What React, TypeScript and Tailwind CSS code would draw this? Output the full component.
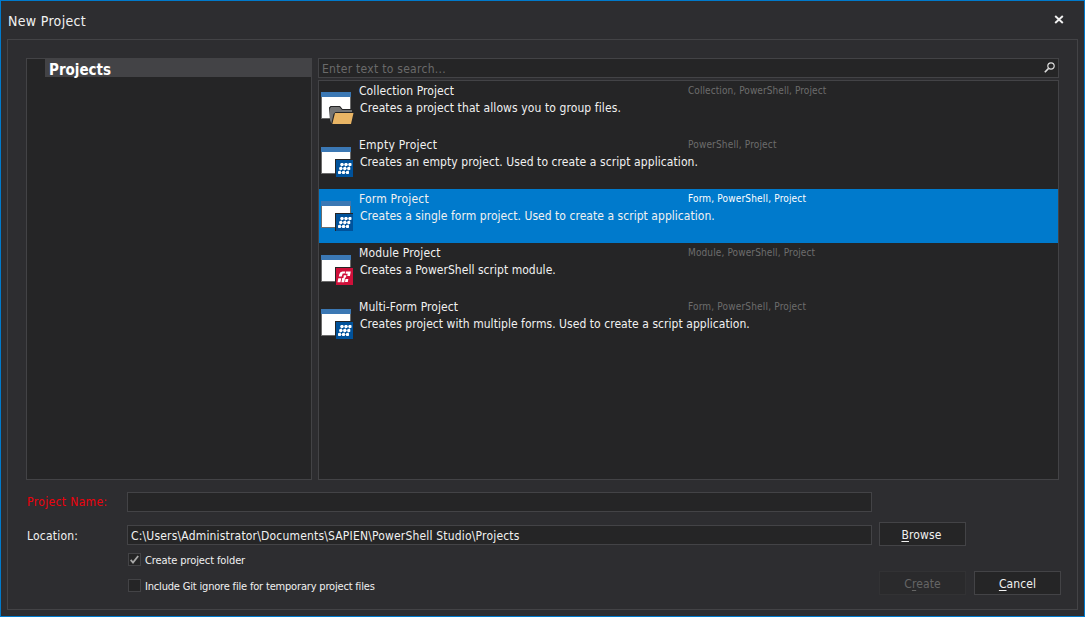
import React from "react";

type Kind = "folder" | "grid" | "module";

interface Template {
  name: string;
  nameClass: string;
  description: string;
  descriptionClass: string;
  tags: string;
  tagsClass: string;
  kind: Kind;
  selected?: boolean;
}

const templates: Template[] = [
  {
    name: "Collection Project",
    nameClass: "tracking-[0.08px]",
    description: "Creates a project that allows you to group files.",
    descriptionClass: "tracking-[0.1px]",
    tags: "Collection, PowerShell, Project",
    tagsClass: "tracking-[0.08px]",
    kind: "folder",
  },
  {
    name: "Empty Project",
    nameClass: "tracking-[0.24px]",
    description: "Creates an empty project. Used to create a script application.",
    descriptionClass: "tracking-[0.08px]",
    tags: "PowerShell, Project",
    tagsClass: "tracking-[0.16px]",
    kind: "grid",
  },
  {
    name: "Form Project",
    nameClass: "tracking-[0.2px]",
    description: "Creates a single form project. Used to create a script application.",
    descriptionClass: "tracking-[0.04px]",
    tags: "Form, PowerShell, Project",
    tagsClass: "tracking-[0.17px]",
    kind: "grid",
    selected: true,
  },
  {
    name: "Module Project",
    nameClass: "tracking-[0.15px]",
    description: "Creates a PowerShell script module.",
    descriptionClass: "tracking-[0.03px]",
    tags: "Module, PowerShell, Project",
    tagsClass: "tracking-[0.12px]",
    kind: "module",
  },
  {
    name: "Multi-Form Project",
    nameClass: "tracking-[0.08px]",
    description: "Creates project with multiple forms. Used to create a script application.",
    descriptionClass: "tracking-[0.05px]",
    tags: "Form, PowerShell, Project",
    tagsClass: "tracking-[0.17px]",
    kind: "grid",
  },
];

function TemplateIcon({ kind }: { kind: Kind }) {
  const top = kind === "folder" ? 0 : 1;
  return (
    <svg width="34" height="36" viewBox="0 0 34 36" className="block shrink-0">
      <g transform={`translate(0 ${top})`}>
        <rect x="0" y="0" width="30" height="27" fill="#6b6b6b" />
        <rect x="1" y="5" width="28" height="21" fill="#fff" />
        <rect x="0" y="0" width="30" height="5" fill="#3b78b4" />
      </g>
      {kind === "folder" && (
        <g>
          <path d="M8 15.500L9.500 14H19l2.500 3H32v5l-2 11H10.500L9 28z" fill="#252526" />
          <path d="M9 16.500L10 15h8.500l2.500 3H31v2H14.500L12.500 22 10.300 31.500 9 28z" fill="#747474" />
          <path d="M14 21H32.500L30 32H11.300z" fill="#e9b565" />
        </g>
      )}
      {kind === "grid" && (
        <g>
          <rect x="14" y="13" width="18" height="18" fill="#252526" />
          <rect x="15" y="14" width="17" height="17" fill="#00529b" />
          <path
            d="M19 18.500h10.500M18 22.500h10.500M17 26.500h10.500M21.200 17l-3 11M25.200 17l-3 11M29.200 17l-3 11"
            stroke="#fff"
            strokeOpacity=".55"
            strokeWidth="1"
          />
          <g fill="#fff">
            <rect x="19.500" y="17" width="3" height="3" rx=".7" />
            <rect x="23.500" y="17" width="3" height="3" rx=".7" />
            <rect x="27.500" y="17" width="3" height="3" rx=".7" />
            <rect x="18.300" y="21" width="3" height="3" rx=".7" />
            <rect x="22.300" y="21" width="3" height="3" rx=".7" />
            <rect x="26.300" y="21" width="3" height="3" rx=".7" />
            <rect x="17" y="25" width="3" height="3" rx=".7" />
            <rect x="21" y="25" width="3" height="3" rx=".7" />
            <rect x="25" y="25" width="3" height="3" rx=".7" />
          </g>
        </g>
      )}
      {kind === "module" && (
        <g>
          <rect x="14" y="13" width="18" height="18" fill="#252526" />
          <rect x="15" y="14" width="17" height="17" fill="#d0103a" />
          <path d="M17.800 22.500l.6-2.500q.6-2.400 3-2.600h2.800l-.5 2.200h-2l-1 2.900zM17.300 24.200h3l-.8 4h-3z" fill="#fff" />
          <path d="M25 17.400h4.800l-.9 4.600h-2.700l.5-2.300h-2.100z" fill="#fff" />
          <path d="M22.800 21.200h2.600l-.4 2-1 .8-.8 4.200h-2.800l.8-4.200h1.200z" fill="#fff" />
          <path d="M24.500 25h2.800l-.5 3h-2.800z" fill="#fff" />
        </g>
      )}
    </svg>
  );
}

function TemplateRow({ item }: { item: Template }) {
  return (
    <li className={`flex h-[54px] ${item.selected ? "bg-[#007acc]" : ""}`}>
      <div className="w-10 pt-[11px] pl-[2px]">
        <TemplateIcon kind={item.kind} />
      </div>
      <div className="min-w-0 flex-1 pt-[2px]">
        <div className="flex h-4 leading-4">
          <span className={`w-[329px] ${item.nameClass}`}>{item.name}</span>
          <span className={`text-[10px] leading-4 ${item.tagsClass} ${item.selected ? "text-white" : "text-[#6d6d6d]"}`}>{item.tags}</span>
        </div>
        <p className={`pl-px leading-[18px] ${item.descriptionClass}`}>{item.description}</p>
      </div>
    </li>
  );
}

function AccessKey({ text }: { text: string }) {
  return <span className="underline underline-offset-2">{text}</span>;
}

export default function App() {
  return (
    <div className="flex h-[617px] w-[1085px] flex-col overflow-hidden border border-[#007acc] bg-[#2d2d30] px-[6px] pb-[6px] font-['DejaVu_Sans_Condensed','Liberation_Sans',sans-serif] text-[12px] whitespace-nowrap text-[#f1f1f1]">
      <header className="flex h-[38px] shrink-0 items-center justify-between pr-[14px] pl-px">
        <h1 className="pt-[2px] text-[14px] leading-[18px] tracking-[0.32px]">New Project</h1>
        <svg width="10" height="9" viewBox="0 0 10 9" className="mb-px">
          <path d="M1.200 1l7.600 7M8.800 1l-7.600 7" stroke="#f1f1f1" strokeWidth="1.900" />
        </svg>
      </header>

      <main className="flex flex-1 flex-col border border-[#434346] px-[18px] pt-[18px]">
        <div className="flex h-[422px] gap-[6px]">
          <nav className="w-[286px] border border-[#434346] bg-[#252526]">
            <div className="ml-[18px] h-[18px] bg-[#434346] pl-[4px] text-[15px] leading-[23px] font-bold text-white">
              Projects
            </div>
          </nav>
          <section className="flex w-[741px] flex-col gap-[2px]">
            <div className="flex h-5 items-center justify-between border border-[#434346] bg-[#252526] pr-[3px] pl-[3px]">
              <span className="pt-[2px] leading-4 tracking-[0.28px] text-[#6a6a6a]">Enter text to search...</span>
              <svg width="11" height="11" viewBox="0 0 11 11" fill="none" stroke="#dcdcdc" className="mb-px">
                <circle cx="7" cy="4" r="3.200" strokeWidth="1.200" />
                <path d="M4.600 6.400L.8 10.200" strokeWidth="1.600" />
              </svg>
            </div>
            <ul className="flex-1 border border-[#434346] bg-[#252526]">
              {templates.map((t) => (
                <TemplateRow key={t.name} item={t} />
              ))}
            </ul>
          </section>
        </div>

        <div className="mt-3 flex h-5 items-center">
          <span className="w-[101px] pl-px tracking-[0.36px] text-[#f0000c]">Project Name:</span>
          <div className="h-5 w-[745px] border border-[#434346] bg-[#252526]" />
        </div>

        <div className="mt-[10px] flex h-6 items-center">
          <span className="w-[101px] pt-[4px] pl-px tracking-[0.2px]">Location:</span>
          <div className="mt-[2px] h-5 w-[745px] border border-[#434346] bg-[#252526] pl-[3px] leading-[21px] tracking-[0.18px]">
            C:\Users\Administrator\Documents\SAPIEN\PowerShell Studio\Projects
          </div>
          <button className="ml-[7px] h-6 w-[87px] border border-[#434346] bg-[#252526] pt-[2px] pr-[2px] tracking-[0.15px]">
            <AccessKey text="B" />rowse
          </button>
        </div>

        <div className="flex justify-between pl-[102px]">
          <div className="flex flex-col gap-[13px] pt-[7px] text-[11px]">
            <label className="flex h-[13px] items-center gap-[4px] tracking-[-0.1px]">
              <span className="flex h-[13px] w-[13px] items-center justify-center border border-[#434346] bg-[#252526]">
                <svg width="9" height="9" viewBox="0 0 9 9" fill="none" stroke="#a8a8a8" strokeWidth="1.800">
                  <path d="M.7 4.800l2.300 2.700L8.200 1" />
                </svg>
              </span>
              <span className="pt-[3px]">Create project folder</span>
            </label>
            <label className="flex h-[13px] items-center gap-[4px] tracking-[-0.18px]">
              <span className="h-[13px] w-[13px] border border-[#434346] bg-[#252526]" />
              <span className="pt-[3px]">Include Git ignore file for temporary project files</span>
            </label>
          </div>
          <div className="-mr-[2px] flex gap-2 pt-[25px]">
            <button className="h-6 w-[87px] border border-[#323234] bg-[#2a2a2c] pt-[2px] tracking-[0.1px] text-[#656565]">
              C<AccessKey text="r" />eate
            </button>
            <button className="h-6 w-[87px] border border-[#434346] bg-[#252526] pt-[2px] tracking-[0.1px]">
              <AccessKey text="C" />ancel
            </button>
          </div>
        </div>
      </main>
    </div>
  );
}
